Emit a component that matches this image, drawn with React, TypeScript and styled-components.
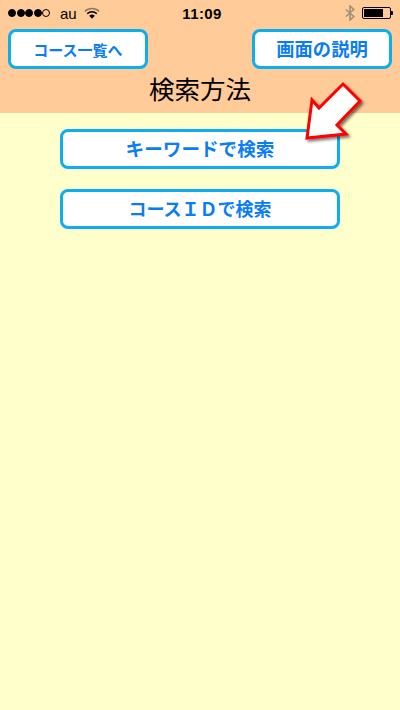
import React from 'react';
import styled, { createGlobalStyle } from 'styled-components';

const GlobalStyle = createGlobalStyle`
  html, body {
    margin: 0;
    padding: 0;
    background: #ffffcc;
  }
  * {
    box-sizing: border-box;
  }
`;

const fontStack = `"Liberation Sans", "Noto Sans CJK JP", sans-serif`;

const Screen = styled.div`
  position: relative;
  width: 400px;
  height: 710px;
  overflow: hidden;
  background: #ffffcc;
  font-family: ${fontStack};
`;

const Header = styled.header`
  height: 113px;
  background: #ffcc99;
  display: flex;
  flex-direction: column;
`;

const StatusBar = styled.div`
  height: 29px;
  display: grid;
  grid-template-columns: 1fr auto 1fr;
  align-items: center;
  padding: 0 9px 3px 8px;
  color: #000;
`;

const StatusLeft = styled.div`
  display: flex;
  align-items: center;
`;

const Signal = styled.div`
  display: flex;
  gap: 0.5px;
  margin-right: 10px;
`;

const Dot = styled.span<{ $empty?: boolean }>`
  width: 8px;
  height: 8px;
  border-radius: 50%;
  background: ${(p) => (p.$empty ? 'transparent' : '#000')};
  border: 1px solid #000;
`;

const Carrier = styled.span`
  font-size: 15px;
  margin-right: 7px;
`;

const Time = styled.span`
  font-size: 15px;
  font-weight: 700;
  letter-spacing: 0.4px;
  padding-left: 5px;
`;

const StatusRight = styled.div`
  display: flex;
  align-items: center;
  justify-content: flex-end;
  gap: 7px;
`;

const Battery = styled.div`
  position: relative;
  width: 29px;
  height: 12px;
  border: 1px solid #000;
  border-radius: 2px;
  padding: 1px;
  &::after {
    content: '';
    position: absolute;
    right: -3px;
    top: 3px;
    width: 2px;
    height: 4px;
    background: #000;
    border-radius: 0 1px 1px 0;
  }
`;

const BatteryFill = styled.div`
  width: 19px;
  height: 100%;
  background: #000;
`;

const TopRow = styled.div`
  display: flex;
  justify-content: space-between;
  padding: 0 8px;
`;

const Button = styled.button<{ $width: number; $size: number }>`
  width: ${(p) => p.$width}px;
  height: 40px;
  padding: 2px 0 0;
  background: #fff;
  border: 3px solid #0caef0;
  border-radius: 8px;
  color: #0a7df5;
  font-family: ${fontStack};
  font-size: ${(p) => p.$size}px;
  font-weight: 700;
  line-height: 1;
`;

const Title = styled.h1`
  margin: 3px 0 0;
  text-align: center;
  font-size: 25.5px;
  font-weight: 400;
  line-height: 36px;
  color: #000;
`;

const Menu = styled.main`
  display: flex;
  flex-direction: column;
  align-items: center;
  gap: 20px;
  padding-top: 16px;
`;

const Arrow = styled.svg`
  position: absolute;
  left: 300px;
  top: 78px;
  overflow: visible;
`;

const App = () => {
  return (
    <Screen>
      <GlobalStyle />
      <Header>
        <StatusBar>
          <StatusLeft>
            <Signal>
              <Dot />
              <Dot />
              <Dot />
              <Dot />
              <Dot $empty />
            </Signal>
            <Carrier>au</Carrier>
            <svg width="16" height="12" viewBox="0 0 16 12">
              <path d="M0.8 4.4a10.2 10.2 0 0 1 14.4 0" fill="none" stroke="#8a7a66" strokeWidth="1.5" />
              <path d="M3.2 6.8a6.8 6.8 0 0 1 9.6 0" fill="none" stroke="#000" strokeWidth="1.5" />
              <path d="M5.2 8.8a4 4 0 0 1 5.6 0L8 11.8z" fill="#000" />
            </svg>
          </StatusLeft>
          <Time>11:09</Time>
          <StatusRight>
            <svg width="10" height="16" viewBox="0 0 10 16">
              <path d="M0.8 4.5l8 7-3.8 3.5V1l3.8 3.5-8 7" fill="none" stroke="#a08f7c" strokeWidth="1.6" />
            </svg>
            <Battery>
              <BatteryFill />
            </Battery>
          </StatusRight>
        </StatusBar>
        <TopRow>
          <Button $width={140} $size={15}>コース一覧へ</Button>
          <Button $width={140} $size={18.3}>画面の説明</Button>
        </TopRow>
        <Title>検索方法</Title>
      </Header>
      <Menu>
        <Button $width={280} $size={18.6}>キーワードで検索</Button>
        <Button $width={280} $size={18}>コースＩＤで検索</Button>
      </Menu>
      <Arrow width="64" height="64" viewBox="0 0 64 64">
        <defs>
          <filter id="arrow-shadow" x="-20%" y="-20%" width="150%" height="150%">
            <feDropShadow dx="2" dy="2" stdDeviation="1.5" floodColor="#000" floodOpacity="0.55" />
          </filter>
        </defs>
        <polygon
          points="7,60 12,22 19,30 43,6 60,23 37,47 46,56"
          fill="#fff"
          stroke="#ff0000"
          strokeWidth="3"
          strokeLinejoin="miter"
          filter="url(#arrow-shadow)"
        />
      </Arrow>
    </Screen>
  );
};

export default App;
